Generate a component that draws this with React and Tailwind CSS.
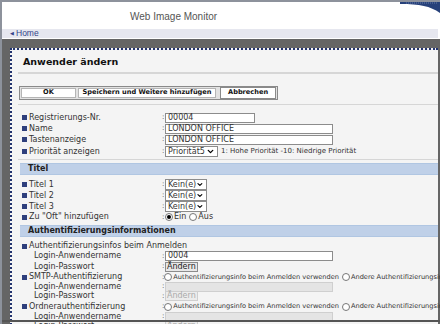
import { ChevronDown } from "lucide-react";

const font = { fontFamily: '"DejaVu Sans", Verdana, sans-serif' };

function Bullet() {
  return <span className="inline-block w-[5px] h-[5px] bg-[#2e3f7c] mr-[2px] shrink-0" />;
}

function Row({ label, indent, h = "h-[11px]", children }) {
  return (
    <div className={`flex items-center ${h}`}>
      <div className={`flex items-center w-[140px] shrink-0 ${indent ? "pl-[12px]" : ""}`}>
        {!indent && <Bullet />}
        <span className="whitespace-nowrap">{label}</span>
      </div>
      {children && (
        <>
          <span className="w-[3px] text-[7px] leading-none">:</span>
          <div className="flex items-center gap-[3px] whitespace-nowrap">{children}</div>
        </>
      )}
    </div>
  );
}

function TextInput({ value, w, disabled }) {
  return (
    <div
      className={`h-[10px] ${w} border px-[2px] leading-[8px] text-[8px] ${
        disabled ? "bg-[#e4e4e4] border-[#cfcfcf]" : "bg-white border-[#8c8c8c]"
      }`}
    >
      {value}
    </div>
  );
}

function Select({ value, w }) {
  return (
    <div className={`h-[11px] ${w} border border-[#8c8c8c] bg-white flex items-center justify-between px-[2px] text-[8px] leading-none`}>
      <span>{value}</span>
      <ChevronDown size={9} strokeWidth={3.5} className="text-black" />
    </div>
  );
}

function Radio({ checked }) {
  return (
    <span className="inline-flex items-center justify-center w-[8px] h-[8px] rounded-full border border-[#777] bg-white">
      {checked && <span className="w-[4px] h-[4px] rounded-full bg-black" />}
    </span>
  );
}

function SmallButton({ label, disabled }) {
  return (
    <div
      className={`h-[10px] px-[1px] border text-[8px] leading-[8px] ${
        disabled ? "border-[#cfcfcf] bg-[#ececec] text-[#aaa]" : "border-[#8c8c8c] bg-[#e8e8e8] text-[#222]"
      }`}
    >
      {label}
    </div>
  );
}

function Section({ title }) {
  return (
    <div className="h-[12px] bg-[#bfd0e8] border-y border-[#b0c6e2] flex items-center pl-[8px] font-bold text-[8px] text-[#222]">
      {title}
    </div>
  );
}

function AuthChoice() {
  return (
    <>
      <span className="flex items-center gap-[1px] text-[6.6px]">
        <Radio />Authentifizierungsinfo beim Anmelden verwenden
      </span>
      <span className="flex items-center gap-[1px] text-[6.6px]">
        <Radio />Andere Authentifizierungsinfo verwenden
      </span>
    </>
  );
}

export default function App() {
  return (
    <div className="relative w-[440px] h-[324px] overflow-hidden bg-white border-l-2 border-t-2 border-[#8d929c] text-[#333]" style={font}>
      {/* header */}
      <div className="h-[27px] flex items-center pl-[128px] pt-[2px]">
        <span className="text-[10px] text-[#555]" style={{ fontFamily: '"Liberation Sans", Arial, sans-serif' }}>
          Web Image Monitor
        </span>
      </div>
      <svg className="absolute top-0 right-0" width="40" height="12" viewBox="0 0 40 12">
        <path d="M0 0 H40 V11 C30 4 20 2 0 2 Z" fill="#27417a" />
        <path d="M6 1 H38" stroke="#8fa3c8" strokeWidth="0.6" strokeDasharray="1 1" />
      </svg>
      <div className="h-[9px] mr-[2px] bg-[#e6e7ef] flex items-center pl-[8px] text-[8.5px] leading-none text-[#33448a]" style={{ fontFamily: '"Liberation Sans", Arial, sans-serif' }}>
        <span className="text-[5px] mr-[2px]">◀</span>Home
      </div>

      {/* gray frame */}
      <div className="bg-[#656565] pl-[8px] pt-[9px] pr-[2px] h-full mt-[1px]">
        <div className="border-t-2 border-l-2 border-dotted border-[#22336e] bg-[#f4f4f4] h-full pl-[6px]">
          <div className="h-[22px] flex items-center pl-[5px] pt-[2px] font-bold text-[9.5px] text-[#111]">
            Anwender ändern
          </div>
          <div className="border-t-2 border-[#d6d6d6]" />

          <div className="mt-[12px] ml-[1px] flex items-center h-[14px] w-[259px] bg-[#e2e2e2] border border-[#8a8a8a] px-[1px] font-bold text-[6.6px] text-[#111] whitespace-nowrap">
            <div className="w-[55px] h-[10px] bg-white border border-[#b5b5b5] flex items-center justify-center">OK</div>
            <div className="w-[139px] h-[10px] ml-[2px] bg-white border border-[#b5b5b5] flex items-center justify-center">Speichern und Weitere hinzufügen</div>
            <div className="w-[56px] h-[12px] ml-[4px] bg-white border border-[#8a8a8a] flex items-center justify-center">Abbrechen</div>
          </div>
          <div className="border-t border-[#d6d6d6] mt-[4px]" />

          <div className="pl-[4px] text-[8px] leading-none mt-[7px]">
            <Row label="Registrierungs-Nr.">
              <TextInput value="00004" w="w-[90px]" />
            </Row>
            <Row label="Name">
              <TextInput value="LONDON OFFICE" w="w-[168px]" />
            </Row>
            <Row label="Tastenanzeige">
              <TextInput value="LONDON OFFICE" w="w-[168px]" />
            </Row>
            <Row label="Priorität anzeigen" h="h-[13px]">
              <Select value="Priorität5" w="w-[53px]" />
              <span className="text-[7px]">1: Hohe Priorität -10: Niedrige Priorität</span>
            </Row>
          </div>
          <div className="border-t border-[#d6d6d6] mt-[1px]" />
          <div className="pl-[2px] mt-[3px]">
            <Section title="Titel" />
          </div>
          <div className="pl-[4px] text-[8px] leading-none mt-[4px]">
            <Row label="Titel 1">
              <Select value="Kein(e)" w="w-[42px]" />
            </Row>
            <Row label="Titel 2">
              <Select value="Kein(e)" w="w-[42px]" />
            </Row>
            <Row label="Titel 3">
              <Select value="Kein(e)" w="w-[42px]" />
            </Row>
            <Row label='Zu "Oft" hinzufügen' h="h-[10px]">
              <span className="flex items-center gap-[1px]">
                <Radio checked />Ein
              </span>
              <span className="flex items-center gap-[1px]">
                <Radio />Aus
              </span>
            </Row>
          </div>
          <div className="pl-[2px] mt-[3px]">
            <Section title="Authentifizierungsinformationen" />
          </div>
          <div className="pl-[4px] text-[8px] leading-none mt-[4px]">
            <Row label="Authentifizierungsinfos beim Anmelden" h="h-[10px]" />
            <Row label="Login-Anwendername" indent h="h-[10px]">
              <TextInput value="0004" w="w-[168px]" />
            </Row>
            <Row label="Login-Passwort" indent h="h-[11px]">
              <SmallButton label="Ändern" />
            </Row>
            <Row label="SMTP-Authentifizierung" h="h-[10px]">
              <AuthChoice />
            </Row>
            <Row label="Login-Anwendername" indent h="h-[9px]">
              <TextInput value="" w="w-[168px]" disabled />
            </Row>
            <Row label="Login-Passwort" indent h="h-[10px]">
              <SmallButton label="Ändern" disabled />
            </Row>
            <Row label="Ordnerauthentifizierung" h="h-[11px]">
              <AuthChoice />
            </Row>
            <Row label="Login-Anwendername" indent h="h-[9px]">
              <TextInput value="" w="w-[168px]" disabled />
            </Row>
            <Row label="Login-Passwort" indent h="h-[10px]">
              <SmallButton label="Ändern" disabled />
            </Row>
          </div>
        </div>
      </div>

      {/* window frame bottom edge */}
      <div className="absolute left-0 right-0 bottom-[2px] h-[2px] bg-[#555]" />
    </div>
  );
}
